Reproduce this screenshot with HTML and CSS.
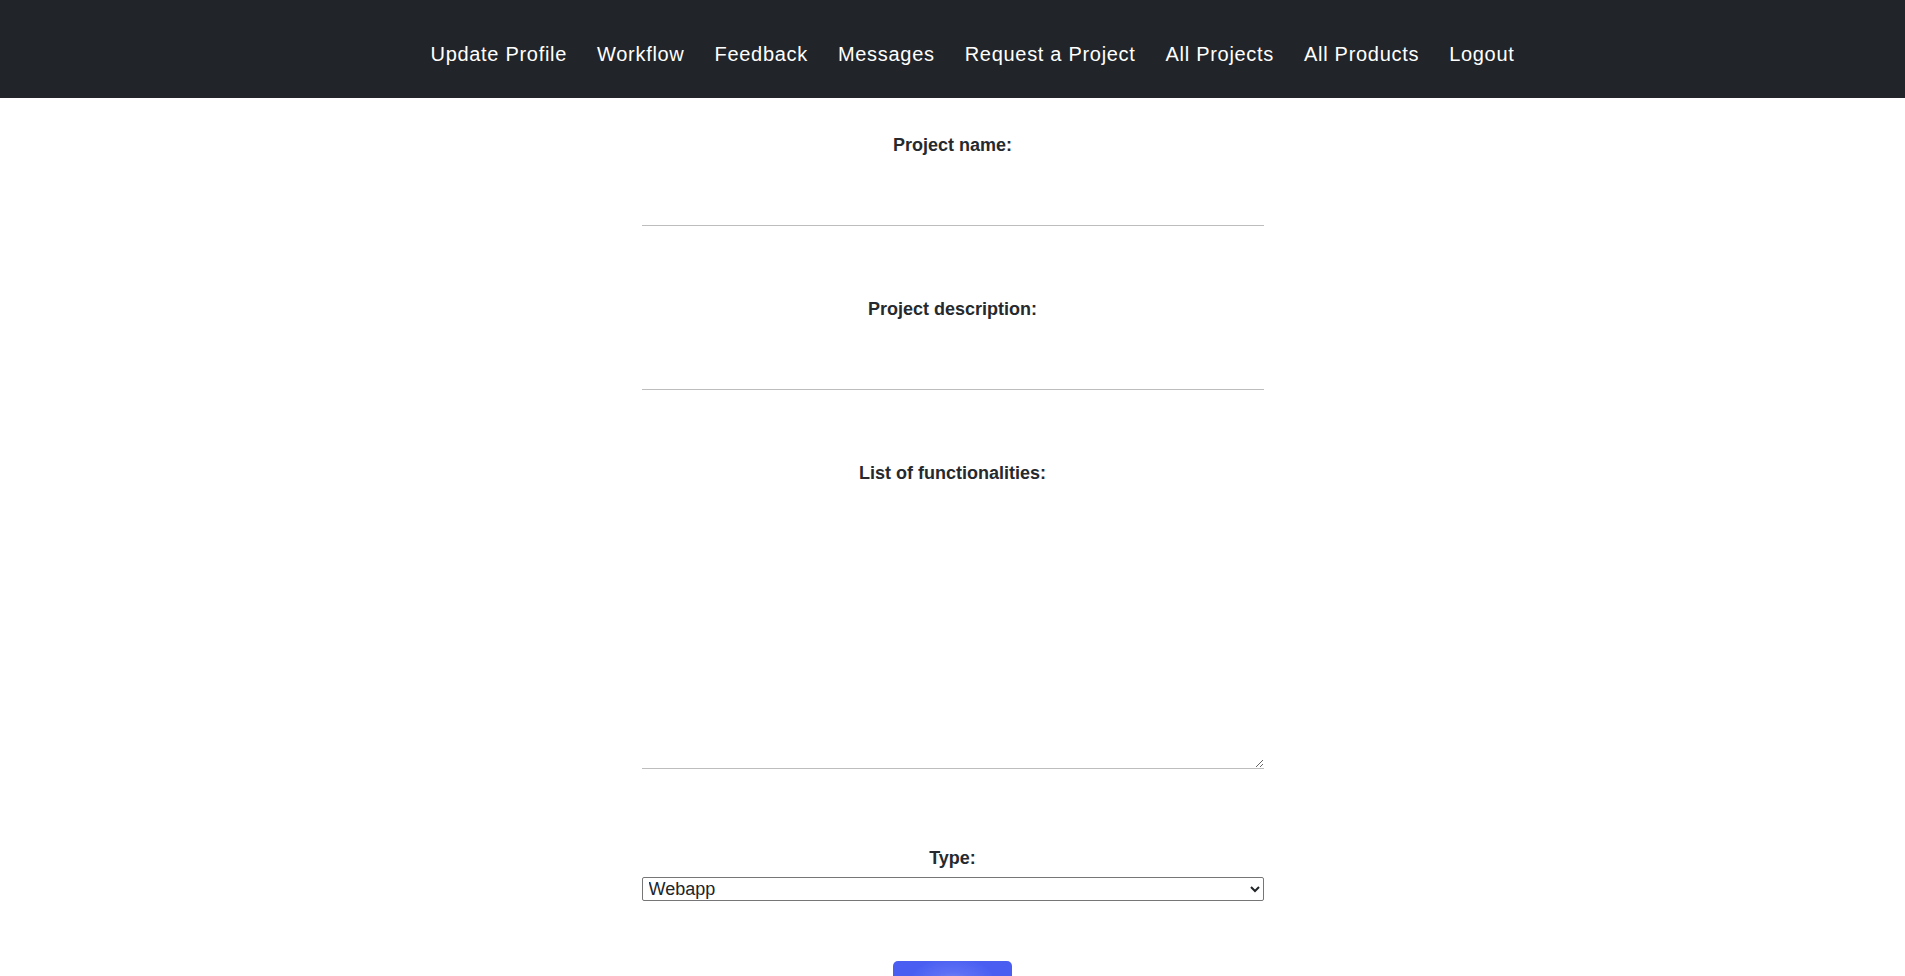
FILE: index.html
```html
<!DOCTYPE html>
<html lang="en">
<head>
<meta charset="utf-8">
<title>Request a Project</title>
<link rel="stylesheet" href="styles.css">
</head>
<body>
<nav class="navbar">
  <ul class="nav-list">
    <li><a class="nav-link" href="#">Update Profile</a></li>
    <li><a class="nav-link" href="#">Workflow</a></li>
    <li><a class="nav-link" href="#">Feedback</a></li>
    <li><a class="nav-link" href="#">Messages</a></li>
    <li><a class="nav-link" href="#">Request a Project</a></li>
    <li><a class="nav-link" href="#">All Projects</a></li>
    <li><a class="nav-link" href="#">All Products</a></li>
    <li><a class="nav-link" href="#">Logout</a></li>
  </ul>
</nav>
<main class="page">
  <form class="project-form">
    <label class="field-label first" for="pname">Project name:</label>
    <input class="line-input" id="pname" type="text">

    <label class="field-label" for="pdesc">Project description:</label>
    <input class="line-input" id="pdesc" type="text">

    <label class="field-label" for="pfunc">List of functionalities:</label>
    <textarea class="line-area" id="pfunc"></textarea>

    <label class="field-label type-label" for="ptype">Type:</label>
    <select class="type-select" id="ptype">
      <option>Webapp</option>
      <option>Mobile app</option>
      <option>Desktop app</option>
    </select>

    <button class="submit-btn" type="submit">Submit</button>
  </form>
</main>
</body>
</html>
```
FILE: styles.css
```css
html, body {
  margin: 0;
  padding: 0;
  background: #ffffff;
  font-family: "Liberation Sans", Arial, sans-serif;
  color: #212529;
}

.navbar {
  height: 98px;
  background: #212529;
  box-sizing: border-box;
  padding-top: 10px;
  display: flex;
  align-items: center;
  justify-content: center;
}

.nav-list {
  list-style: none;
  margin: 0;
  padding: 0 0 0 40px;
  display: flex;
  gap: 30px;
}

.nav-link {
  color: #ffffff;
  text-decoration: none;
  font-size: 20px;
  letter-spacing: 0.7px;
  line-height: 24px;
}

.page {
  display: flex;
  justify-content: center;
}

.project-form {
  width: 622px;
  display: flex;
  flex-direction: column;
  align-items: center;
}

.field-label {
  display: block;
  font-size: 18px;
  font-weight: bold;
  line-height: 21px;
  margin-top: 73px;
  color: #262a2e;
}

.field-label.first {
  margin-top: 37px;
}

.line-input {
  width: 100%;
  height: 60px;
  margin-top: 10px;
  box-sizing: border-box;
  border: none;
  border-bottom: 1px solid #bdbdbd;
  outline: none;
  font-family: inherit;
  font-size: 18px;
  background: transparent;
}

.line-area {
  display: block;
  width: 100%;
  height: 275px;
  margin: 10px 0 0 0;
  box-sizing: border-box;
  border: none;
  border-bottom: 1px solid #bdbdbd;
  outline: none;
  font-family: inherit;
  font-size: 18px;
  resize: both;
  background: transparent;
}

.type-label {
  margin-top: 79px;
}

.type-select {
  width: 100%;
  height: 24px;
  margin-top: 8px;
  box-sizing: border-box;
  font-family: inherit;
  font-size: 18px;
  color: #212529;
  border: 1px solid #767676;
  border-radius: 2px;
  background: #ffffff;
  padding: 0 2px;
}

.submit-btn {
  margin-top: 60px;
  width: 119px;
  height: 58px;
  border: none;
  border-radius: 5px;
  color: #ffffff;
  font-family: inherit;
  font-size: 18px;
  background: radial-gradient(ellipse 45px 30px at 50% 45%, #8795f6 0%, #5d6ff4 50%, #4a5ff2 100%);
}
```
